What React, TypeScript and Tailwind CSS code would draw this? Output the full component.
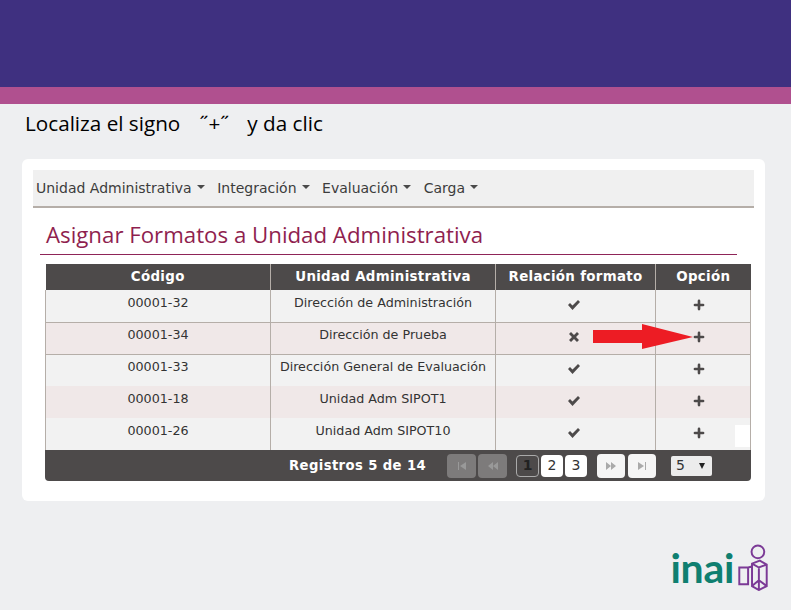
import { Plus } from 'lucide-react'

const rows = [
  { code: '00001-32', unit: 'Dirección de Administración', ok: true },
  { code: '00001-34', unit: 'Dirección de Prueba', ok: false },
  { code: '00001-33', unit: 'Dirección General de Evaluación', ok: true },
  { code: '00001-18', unit: 'Unidad Adm SIPOT1', ok: true },
  { code: '00001-26', unit: 'Unidad Adm SIPOT10', ok: true },
]

const menus = ['Unidad Administrativa', 'Integración', 'Evaluación', 'Carga']

function Caret() {
  return <span className="ml-[5px] mt-[-2px] inline-block h-0 w-0 border-x-[4px] border-t-[4px] border-x-transparent border-t-[#4a4a4a]" />
}

function PagerIcon({ d }: { d: string }) {
  return (
    <svg width="10" height="8" viewBox="0 0 10 8" fill="currentColor">
      <path d={d} />
    </svg>
  )
}

function CheckMark() {
  return (
    <svg className="mx-auto" width="12" height="10" viewBox="0 0 12 10" fill="#4d4a4a">
      <path d="M0 5l2-2 2.5 2.500L10 0l2 2-7.500 8z" />
    </svg>
  )
}

function CrossMark() {
  return (
    <svg className="mx-auto" width="10" height="10" viewBox="0 0 10 10" fill="#4d4a4a">
      <path d="M2 0l3 3 3-3 2 2-3 3 3 3-2 2-3-3-3 3-2-2 3-3-3-3z" />
    </svg>
  )
}

function InaiLogo() {
  return (
    <div className="flex items-end gap-[4px]">
      <span className="mb-[5px] font-['Lato',sans-serif] text-[41px] font-bold leading-[37px] tracking-[-0.3px] text-[#0f7f70]">inai</span>
      <svg width="30" height="47" viewBox="0 0 30 48" fill="none" stroke="#7b3a96" strokeWidth="2">
        <circle cx="20" cy="8" r="6.500" />
        <path d="M1 24h9v17H1zM10 24l4-1M14 20l8-3 7 4v22l-8 4-7-4zM14 20l7 4 8-3M21 24v23M14 43l7-6 8 6" />
      </svg>
    </div>
  )
}

export default function App() {
  return (
    <div className="relative h-[610px] w-[791px] overflow-hidden bg-[#eeeff1]">
      <div className="h-[87px] bg-[#3f3080]" />
      <div className="h-[17px] bg-[#b0508f]" />
      <p className="ml-[25px] mt-[6px] h-[29px] whitespace-pre font-['Open_Sans',sans-serif] text-[20.7px] leading-[27px] text-black">
        Localiza el signo   <span className="ml-[3px]">˝+˝</span><span className="ml-[2px]">   y da clic</span>
      </p>

      <div className="relative ml-[22px] mt-[20px] h-[342px] w-[743px] rounded-[6px] bg-white px-[11px] pt-[11px]">
        <nav className="flex h-[38px] items-center gap-[12.500px] border-b-2 border-[#b5aea8] bg-[#f0f0f0] pl-[3px] font-['DejaVu_Sans',sans-serif] text-[14px] text-[#3c3c3c]">
          {menus.map((m) => (
            <span key={m} className="flex items-center">
              {m}
              <Caret />
            </span>
          ))}
        </nav>

        <h1 className="ml-[13px] mt-[11px] font-['Open_Sans',sans-serif] text-[22.25px] leading-[31px] text-[#8f1f4f]">
          Asignar Formatos a Unidad Administrativa
        </h1>
        <div className="ml-[7px] mt-[4px] h-px w-[697px] bg-[#8f2458]" />

        <div className="ml-[12px] mt-[9px] w-[706px] overflow-hidden rounded-b-[4px] font-['DejaVu_Sans',sans-serif]">
          <table className="w-full table-fixed border-collapse text-center text-[12.7px] text-[#333]">
            <thead>
              <tr className="h-[26px] bg-[#4d4a4a] text-[13.4px] font-bold tracking-[0.3px] text-white">
                <th className="w-[225px] border-r border-[#b5aea8]">Código</th>
                <th className="w-[225px] border-r border-[#b5aea8]">Unidad Administrativa</th>
                <th className="w-[160px] border-r border-[#b5aea8]">Relación formato</th>
                <th>Opción</th>
              </tr>
            </thead>
            <tbody>
              {rows.map((r, i) => (
                <tr key={r.code} className={`h-[32px] ${i % 2 ? 'bg-[#f0e8e8]' : 'bg-[#f2f2f2]'} ${i < 2 ? 'border-b border-[#b5aea8]' : ''}`}>
                  <td className="border-r border-l border-[#b5aea8] pb-[7px]">{r.code}</td>
                  <td className="border-r border-[#b5aea8] pb-[7px]">{r.unit}</td>
                  <td className="border-r border-[#b5aea8] pb-[2px] pr-[4px]">
                    {r.ok ? <CheckMark /> : <CrossMark />}
                  </td>
                  <td className="border-r border-[#b5aea8] pb-[2px] pr-[9px]">
                    <Plus size={14} strokeWidth={4.500} className="mx-auto text-[#4d4a4a]" />
                  </td>
                </tr>
              ))}
            </tbody>
          </table>

          <div className="flex h-[31px] items-center bg-[#4d4a4a] pl-[244px]">
            <span className="w-[158px] text-[13.2px] font-bold tracking-[0.4px] text-white">Registros 5 de 14</span>
            <div className="flex gap-[2px]">
              <span className="flex h-[24px] w-[29px] items-center justify-center rounded-[4px] bg-[#7d7b7b] text-[#999]"><PagerIcon d="M1 0h1v8H1zM9 0v8L3 4z" /></span>
              <span className="flex h-[24px] w-[29px] items-center justify-center rounded-[4px] bg-[#7d7b7b] text-[#999]"><PagerIcon d="M5 0v8L0 4zM10 0v8L5 4z" /></span>
            </div>
            <div className="ml-[9px] flex gap-[2px] text-[14px] text-[#333]">
              <span className="flex h-[22px] w-[23px] items-center justify-center rounded-[4px] border border-[#aaa] bg-[#4d4a4a] font-bold text-[#222]">1</span>
              <span className="flex h-[22px] w-[22px] items-center justify-center rounded-[4px] bg-white">2</span>
              <span className="flex h-[22px] w-[22px] items-center justify-center rounded-[4px] bg-white">3</span>
            </div>
            <div className="ml-[10px] flex gap-[3px]">
              <span className="flex h-[24px] w-[28px] items-center justify-center rounded-[4px] bg-[#f5f5f5] text-[#aaa]"><PagerIcon d="M0 0l5 4-5 4zM5 0l5 4-5 4z" /></span>
              <span className="flex h-[24px] w-[28px] items-center justify-center rounded-[4px] bg-[#f5f5f5] text-[#aaa]"><PagerIcon d="M1 0l6 4-6 4zM8 0h1v8H8z" /></span>
            </div>
            <div className="ml-[15px] flex h-[20px] w-[41px] items-center justify-between rounded-[2px] bg-[#ececec] pl-[5px] pr-[7px] text-[14px] text-[#333]">
              5
              <span className="h-0 w-0 border-x-[3.500px] border-t-[6px] border-x-transparent border-t-[#222]" />
            </div>
          </div>
        </div>

        {/* white patch over the last row */}
        <div className="absolute left-[713px] top-[266px] h-[22px] w-[15px] bg-white" />
        {/* red arrow over the table */}
        <svg className="absolute left-[571px] top-[165px]" width="102" height="26" viewBox="0 0 102 26">
          <path d="M0 6h49V0l51 13-51 12v-6H0z" fill="#ed1c24" />
        </svg>
      </div>

      <div className="absolute bottom-[19px] right-[23px]">
        <InaiLogo />
      </div>
    </div>
  )
}
